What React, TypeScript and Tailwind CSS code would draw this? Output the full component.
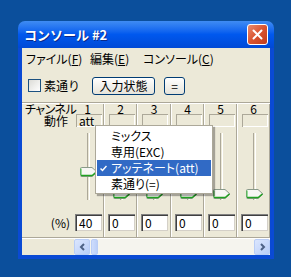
import React from "react";

const FONT = { fontFamily: '"Noto Sans CJK JP", "Liberation Sans", sans-serif' };

const CHANNELS = [
  { n: 1, mode: "att", value: 40, w: "w-[33px]" },
  { n: 2, mode: "", value: 0, w: "w-[33px]" },
  { n: 3, mode: "", value: 0, w: "w-[34px]" },
  { n: 4, mode: "", value: 0, w: "w-[33px]" },
  { n: 5, mode: "", value: 0, w: "w-[33px]" },
  { n: 6, mode: "", value: 0, w: "w-[33px]" },
];

const MENU_ITEMS = [
  { label: "ミックス", checked: false },
  { label: "専用(EXC)", checked: false },
  { label: "アッテネート(att)", checked: true },
  { label: "素通り(=)", checked: false },
];

function Thumb() {
  return (
    <svg width="18" height="10" viewBox="0 0 18 10">
      <path d="M1.5 0.5 H12 L17 5 L12 9.5 H1.5 Q0.5 9.5 0.5 8.5 V1.5 Q0.5 0.5 1.5 0.5 Z" fill="#f7f7f4" stroke="#8a9a8a" />
      <path d="M1 8.5 H12.3 L16.3 5" fill="none" stroke="#21a121" strokeWidth="1.6" />
      <path d="M1 1.5 V8" fill="none" stroke="#3cc23c" strokeWidth="1" />
    </svg>
  );
}

function Channel({ ch }: { ch: (typeof CHANNELS)[number] }) {
  // thumb travels up 0.55px per percent from the bottom stop
  const top = 62 - ch.value * 0.55;
  return (
    <div className={`flex ${ch.w} shrink-0`}>
      <div className="flex flex-1 flex-col">
        <div className="h-[10px] text-center text-[12px] leading-[10px]">{ch.n}</div>
        <div className="ml-[4px] h-[13px] w-[26px] border-t border-l border-[#aca899] pl-[2px] text-[12px] leading-[11px] shadow-[inset_-1px_-1px_0_#fff]">
          {ch.mode}
        </div>
        <div className="relative h-[78px]">
          <div className="absolute top-[6px] bottom-[5px] left-[15px] w-[3px] border-l border-[#aca899] border-r border-r-white" />
          <div className="absolute left-[8px]" style={{ top }}>
            <Thumb />
          </div>
        </div>
        <div className="ml-[3px] mt-[9px] h-[17px] w-[27px] border-t border-l border-[#808080] bg-white pl-[3px] text-[12px] leading-[15px] shadow-[inset_1px_1px_0_#404040,inset_-1px_-1px_0_#d4d0c8]">
          {ch.value}
        </div>
      </div>
      <div className="w-px bg-[#aca899]" />
      <div className="w-px bg-white" />
    </div>
  );
}

export default function App() {
  return (
    <div className="h-[277px] w-[291px] overflow-hidden bg-[#0b4f9c] pt-[21px] pl-[18px]" style={FONT}>
      <div className="flex w-[256px] flex-col">
        {/* Title bar */}
        <div className="flex h-[27px] items-center justify-between rounded-t-[7px] bg-gradient-to-b from-[#3f8cf3] via-[#0058ee] to-[#0049d6] pl-[6px] pr-[6px]">
          <span className="text-[13px] font-bold text-white [text-shadow:1px_1px_0_#0a2a8a]">コンソール #2</span>
          <div className="flex h-[21px] w-[21px] items-center justify-center rounded-[3px] border border-white bg-gradient-to-br from-[#e88a6c] via-[#d9532f] to-[#c13b1a]">
            <svg width="11" height="11" viewBox="0 0 11 11">
              <path d="M1.5 1.5 L9.5 9.5 M9.5 1.5 L1.5 9.5" stroke="#fff" strokeWidth="2" strokeLinecap="round" />
            </svg>
          </div>
        </div>

        {/* Window body */}
        <div className="border-x-4 border-b-4 border-[#0a4ad4]">
          <div className="relative flex h-[207px] flex-col overflow-hidden bg-[#ece9d8] text-black">
            {/* Menu bar */}
            <div className="flex h-[21px] items-center text-[12px] [font-feature-settings:'palt']">
              <span className="ml-[4px] w-[64px]">ファイル(<u>F</u>)</span>
              <span className="w-[53px]">編集(<u>E</u>)</span>
              <span>コンソール(<u>C</u>)</span>
            </div>

            {/* Toolbar */}
            <div className="flex h-[33px] items-center text-[12px]">
              <div className="ml-[6px] h-[13px] w-[13px] border border-[#1c5180] bg-gradient-to-br from-[#dcdcd7] to-white" />
              <span className="ml-[3px]">素通り</span>
              <button className="ml-[12px] h-[18px] w-[63px] rounded-[3px] border border-[#003c74] bg-gradient-to-b from-white to-[#e6e4da] text-[12px] leading-[16px]">
                入力状態
              </button>
              <button className="ml-[9px] h-[18px] w-[21px] rounded-[3px] border border-[#003c74] bg-gradient-to-b from-white to-[#e6e4da] text-[12px] leading-[16px]">
                =
              </button>
            </div>

            <div className="h-px bg-[#aca899]" />
            <div className="h-px bg-white" />

            {/* Channels */}
            <div className="flex h-[133px] shrink-0">
              <div className="flex w-[50px] shrink-0 flex-col text-[12px] [font-feature-settings:'palt']">
                <div className="h-[10px] whitespace-nowrap pl-[3px] leading-[10px] tracking-[-0.5px]">チャンネル</div>
                <div className="h-[13px] pr-[4px] pt-[1px] text-right leading-[12px]">動作</div>
                <div className="mt-[87px] h-[17px] pr-[2px] text-right leading-[17px]">(%)</div>
              </div>
              {CHANNELS.map((ch) => (
                <Channel key={ch.n} ch={ch} />
              ))}
            </div>

            <div className="h-px bg-[#aca899]" />
            <div className="h-px bg-white" />

            {/* Horizontal scrollbar */}
            <div className="flex h-[16px] pl-[52px]">
              <div className="flex flex-1 bg-[#f5f4ee]">
                <div className="flex h-[16px] w-[16px] items-center justify-center rounded-[2px] border border-[#b9cdf6] bg-gradient-to-br from-[#dbe6fe] to-[#b8cdf8]">
                  <svg width="7" height="8" viewBox="0 0 7 8">
                    <path d="M5 1 L2 4 L5 7" fill="none" stroke="#4d6185" strokeWidth="2" />
                  </svg>
                </div>
                <div className="ml-px h-[16px] w-[7px] rounded-[2px] border border-[#b9cdf6] bg-gradient-to-r from-[#cddcfc] to-[#bccff8]" />
                <div className="flex-1" />
                <div className="flex h-[16px] w-[16px] items-center justify-center rounded-[2px] border border-[#b9cdf6] bg-gradient-to-br from-[#dbe6fe] to-[#b8cdf8]">
                  <svg width="7" height="8" viewBox="0 0 7 8">
                    <path d="M2 1 L5 4 L2 7" fill="none" stroke="#4d6185" strokeWidth="2" />
                  </svg>
                </div>
              </div>
            </div>

            {/* Context menu */}
            <div className="absolute top-[77px] left-[73px] w-[118px] border border-[#aca899] bg-white pt-[2px] pb-[1px] text-[12px] shadow-[2px_2px_1px_rgba(0,0,0,0.3)] [font-feature-settings:'palt']">
              {MENU_ITEMS.map((item) => (
                <div
                  key={item.label}
                  className={`relative mx-[1px] flex h-[16px] items-center pl-[14px] leading-[16px] ${
                    item.checked ? "bg-[#316ac5] text-white" : ""
                  }`}
                >
                  {item.checked && (
                    <svg className="absolute left-[3px] top-[5px]" width="7" height="7" viewBox="0 0 7 7">
                      <path d="M0.5 3.5 L2.5 5.5 L6.5 1" fill="none" stroke="#fff" strokeWidth="1.5" />
                    </svg>
                  )}
                  {item.label}
                </div>
              ))}
            </div>
          </div>
        </div>
      </div>
    </div>
  );
}
